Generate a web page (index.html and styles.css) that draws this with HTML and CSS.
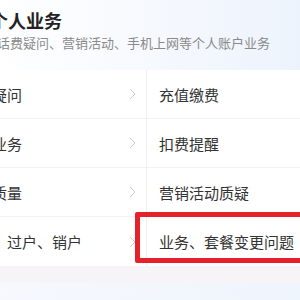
FILE: index.html
```html
<!DOCTYPE html>
<html lang="zh">
<head>
<meta charset="utf-8">
<link rel="stylesheet" href="styles.css">
</head>
<body>
<div class="viewport">
  <div class="sheet">
    <header class="head">
      <h1 class="title">个人业务</h1>
      <p class="sub">话费疑问、营销活动、手机上网等个人账户业务</p>
    </header>
    <div class="grid">
      <div class="cell left"><span>话费疑问</span><svg class="chev" width="7" height="12" viewBox="0 0 7 12"><polyline points="1,1 6,6 1,11" fill="none" stroke="#cccccc" stroke-width="1"/></svg></div>
      <div class="cell right"><span>充值缴费</span></div>
      <div class="cell left"><span>手机业务</span><svg class="chev" width="7" height="12" viewBox="0 0 7 12"><polyline points="1,1 6,6 1,11" fill="none" stroke="#cccccc" stroke-width="1"/></svg></div>
      <div class="cell right"><span>扣费提醒</span></div>
      <div class="cell left"><span>网络质量</span><svg class="chev" width="7" height="12" viewBox="0 0 7 12"><polyline points="1,1 6,6 1,11" fill="none" stroke="#cccccc" stroke-width="1"/></svg></div>
      <div class="cell right"><span>营销活动质疑</span></div>
      <div class="cell left"><span>入网、过户、销户</span><svg class="chev" width="7" height="12" viewBox="0 0 7 12"><polyline points="1,1 6,6 1,11" fill="none" stroke="#cccccc" stroke-width="1"/></svg></div>
      <div class="cell right"><span>业务、套餐变更问题</span></div>
    </div>
    <div class="strip"></div>
    <div class="foot"></div>
  </div>
  <div class="mark"></div>
</div>
</body>
</html>
```

FILE: styles.css
```css
html, body {
  margin: 0;
  padding: 0;
  background: #ffffff;
}
body {
  font-family: "Noto Sans CJK SC", "Noto Sans", sans-serif;
}
.viewport {
  position: relative;
  width: 300px;
  height: 300px;
  overflow: hidden;
}
.sheet {
  width: 400px;
  margin-left: -50px;
}
.head {
  height: 70px;
  box-sizing: border-box;
  padding-top: 9px;
  background: linear-gradient(to right, #ffffff 10%, #eaf1fc 100%);
}
.title {
  margin: 0 0 0 40px;
  font-size: 18px;
  line-height: 22px;
  font-weight: 700;
  color: #222222;
}
.sub {
  margin: 3px 0 0 47px;
  font-size: 13px;
  line-height: 18px;
  color: #8a8a8a;
}
.grid {
  display: grid;
  grid-template-columns: 197px 203px;
  background: #ffffff;
}
.cell {
  height: 49px;
  box-sizing: border-box;
  border-bottom: 1px solid #f2f2f2;
  display: flex;
  align-items: center;
  font-size: 15px;
  color: #333333;
}
.left {
  padding: 0 10px 0 12px;
  justify-content: space-between;
  border-right: 1px solid #f0f0f0;
}
.right {
  padding-left: 12px;
}
.grid .cell:nth-last-child(-n+2) {
  border-bottom: none;
}
.chev {
  display: block;
  flex: none;
}
.strip {
  height: 17px;
  background: #f6f4f7;
}
.foot {
  height: 40px;
  background: linear-gradient(to right, #f7f9fe, #eef4fc);
}
.mark {
  position: absolute;
  left: 135px;
  top: 212px;
  width: 200px;
  height: 51px;
  box-sizing: border-box;
  border: 5px solid #e62129;
  border-radius: 2px;
}
```
